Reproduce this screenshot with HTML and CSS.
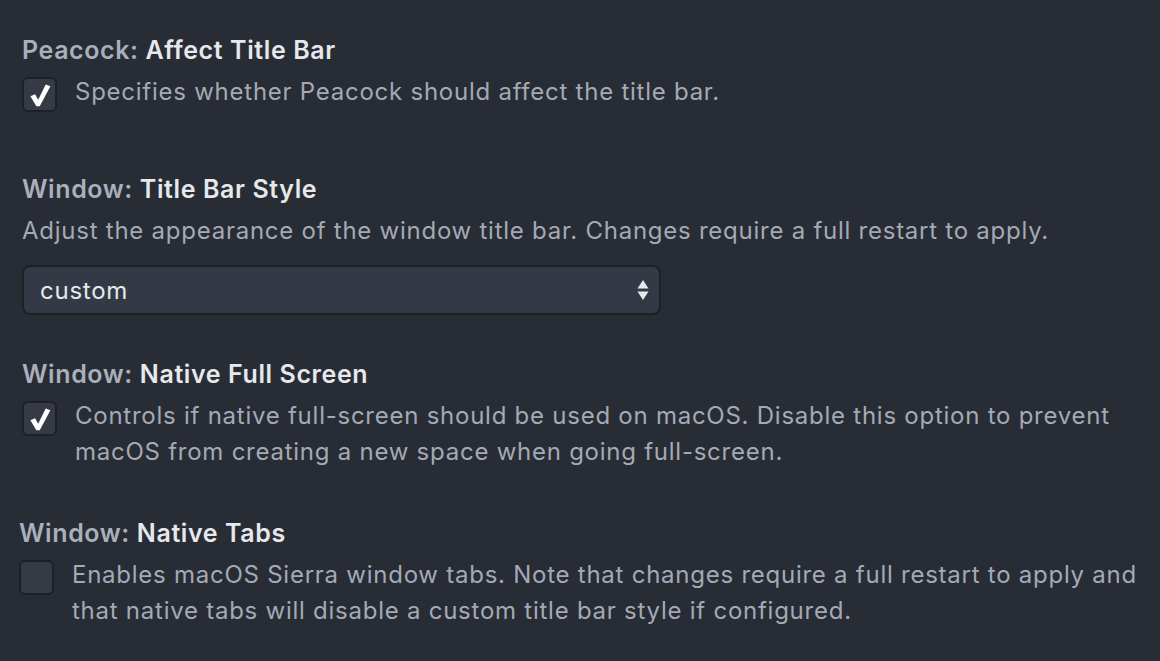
FILE: index.html
```html
<!DOCTYPE html>
<html>
<head>
<meta charset="utf-8">
<link rel="stylesheet" href="styles.css">
</head>
<body>
<div class="settings">
  <section class="setting s1">
    <div class="title"><span class="ns">Peacock: </span><span class="name">Affect Title Bar</span></div>
    <div class="check-row">
      <span class="checkbox checked"><svg viewBox="0 0 20 20" width="26" height="26"><path d="M2.6 11 L6.2 9.4 L8.6 13.6 L14.4 2 L18 3.2 L9.8 18.6 L7.2 18.6 Z" fill="#ffffff"/></svg></span>
      <span class="desc">Specifies whether Peacock should affect the title bar.</span>
    </div>
  </section>

  <section class="setting s2">
    <div class="title"><span class="ns">Window: </span><span class="name">Title Bar Style</span></div>
    <div class="desc">Adjust the appearance of the window title bar. Changes require a full restart to apply.</div>
    <div class="select">
      <span class="value">custom</span>
      <svg class="arrows" viewBox="0 0 12 24" width="12" height="24"><path d="M6 2 L11.5 10.5 L0.5 10.5 Z M0.5 13.5 L11.5 13.5 L6 22 Z" fill="#e6e8ec"/></svg>
    </div>
  </section>

  <section class="setting s3">
    <div class="title"><span class="ns">Window: </span><span class="name">Native Full Screen</span></div>
    <div class="check-row">
      <span class="checkbox checked"><svg viewBox="0 0 20 20" width="26" height="26"><path d="M2.6 11 L6.2 9.4 L8.6 13.6 L14.4 2 L18 3.2 L9.8 18.6 L7.2 18.6 Z" fill="#ffffff"/></svg></span>
      <span class="desc">Controls if native full-screen should be used on macOS. Disable this option to prevent macOS from creating a new space when going full-screen.</span>
    </div>
  </section>

  <section class="setting s4">
    <div class="title"><span class="ns">Window: </span><span class="name">Native Tabs</span></div>
    <div class="check-row">
      <span class="checkbox"></span>
      <span class="desc">Enables macOS Sierra window tabs. Note that changes require a full restart to apply and that native tabs will disable a custom title bar style if configured.</span>
    </div>
  </section>
</div>
</body>
</html>
```

FILE: styles.css
```css
html, body {
  margin: 0;
  padding: 0;
  background: #282c34;
  height: 100%;
}
body {
  font-family: Inter, "Noto Sans", "Liberation Sans", sans-serif;
  font-size: 24px;
  color: #9da5b4;
  overflow: hidden;
}
.settings {
  padding: 32px 10px 0 22px;
  width: 1128px;
}
.setting {
  display: flex;
  flex-direction: column;
}
.title {
  line-height: 36px;
  font-size: 25px;
  font-weight: 600;
  letter-spacing: 0.6px;
}
.ns {
  color: #a9b0bc;
}
.name {
  color: #e6e8ec;
}
.desc {
  line-height: 36px;
  color: #a3aab6;
  letter-spacing: 0.75px;
}
.check-row {
  display: flex;
  align-items: flex-start;
  gap: 18px;
  margin-top: 6px;
}
.checkbox {
  flex: none;
  width: 31px;
  height: 31px;
  margin-top: 3px;
  border: 2px solid #1d2026;
  border-radius: 6px;
  background: #353a44;
  display: flex;
  align-items: center;
  justify-content: center;
}
.s2 { margin-top: 59px; }
.s2 .desc { margin-top: 6px; }
.select {
  margin-top: 16px;
  height: 46px;
  border: 2px solid #1d2026;
  border-radius: 8px;
  background: #343a45;
  display: flex;
  align-items: center;
  justify-content: space-between;
  padding: 0 10px 0 16px;
  width: 609px;
}
.select .value {
  color: #e6e8ec;
  letter-spacing: 0.75px;
}
.s3 { margin-top: 41px; }
.s4 { margin-top: 45px; margin-left: -3px; }
```
